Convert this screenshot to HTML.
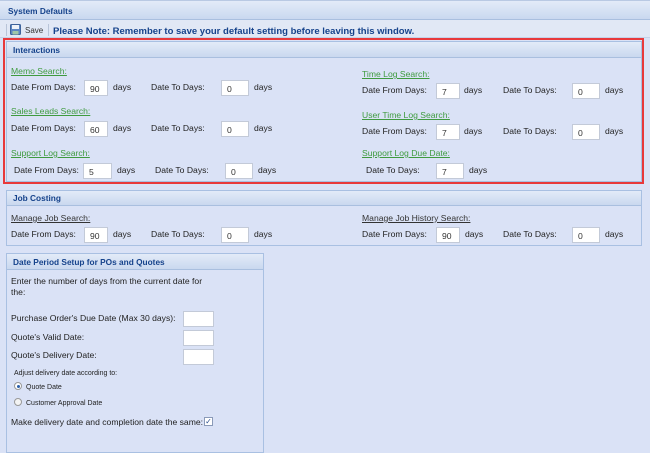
<!DOCTYPE html>
<html><head><meta charset="utf-8"><style>
*{margin:0;padding:0;box-sizing:border-box}
body{width:650px;height:441px;overflow:hidden;background:#dae2f6;font-family:"Liberation Sans",Arial,sans-serif;font-size:8.6px;color:#222;position:relative}
.a{position:absolute;white-space:nowrap;line-height:11px}
.hd{position:absolute;background:linear-gradient(#e3ebf8,#c9d8ef);border-bottom:1px solid #a9bfdf;color:#15428b;font-weight:bold;font-size:8.3px;padding-left:6px}
.lk{color:#3f9b3f;text-decoration:underline}
.lk2{color:#333;text-decoration:underline}
.in{position:absolute;background:#fff;border:1px solid #c3cad8;height:16px;font-size:8.6px;padding:3px 0 0 5px;line-height:10px;color:#333}
.pn{position:absolute;border:1px solid #a9c0e2}
</style></head><body>
<div class="hd" style="left:0;top:0;width:650px;height:20px;line-height:20px;padding-left:8px;border-top:1px solid #b9c9e3">System Defaults</div>
<div style="position:absolute;left:0;top:20px;width:650px;height:18px;background:#e1e8f5;border-bottom:1px solid #c5d2e8"></div>
<div style="position:absolute;left:6px;top:24px;width:1px;height:12px;background:#b8c4d8"></div>
<svg style="position:absolute;left:10px;top:24px" width="11" height="11" viewBox="0 0 11 11"><rect x="0.5" y="0.5" width="10" height="10" rx="1" fill="#5c86c2" stroke="#3d629a"/><rect x="2" y="1" width="7" height="4" fill="#eef2f8"/><rect x="2.5" y="7" width="6" height="3.5" fill="#9fc7a8"/></svg>
<div class="a" style="left:25px;top:25px;font-size:8px;color:#333">Save</div>
<div style="position:absolute;left:48px;top:24px;width:1px;height:12px;background:#b8c4d8"></div>
<div class="a" style="left:53px;top:26px;color:#15428b;font-weight:bold;font-size:9.5px">Please Note: Remember to save your default setting before leaving this window.</div>

<div class="pn" style="left:6px;top:41px;width:636px;height:141px"></div>
<div class="hd" style="left:7px;top:42px;width:634px;height:16px;line-height:16px">Interactions</div>
<div style="position:absolute;left:3px;top:38px;width:641px;height:146px;border:2px solid #e8393b"></div>

<div class="a lk" style="left:11px;top:66px">Memo Search:</div>
<div class="a" style="left:11px;top:82px">Date From Days:</div><div class="in" style="left:84px;top:80px;width:24px">90</div><div class="a" style="left:113px;top:82px">days</div>
<div class="a" style="left:151px;top:82px">Date To Days:</div><div class="in" style="left:221px;top:80px;width:28px">0</div><div class="a" style="left:254px;top:82px">days</div>

<div class="a lk" style="left:11px;top:106px">Sales Leads Search:</div>
<div class="a" style="left:11px;top:123px">Date From Days:</div><div class="in" style="left:84px;top:121px;width:24px">60</div><div class="a" style="left:113px;top:123px">days</div>
<div class="a" style="left:151px;top:123px">Date To Days:</div><div class="in" style="left:221px;top:121px;width:28px">0</div><div class="a" style="left:254px;top:123px">days</div>

<div class="a lk" style="left:11px;top:148px">Support Log Search:</div>
<div class="a" style="left:14px;top:165px">Date From Days:</div><div class="in" style="left:83px;top:163px;width:29px">5</div><div class="a" style="left:117px;top:165px">days</div>
<div class="a" style="left:155px;top:165px">Date To Days:</div><div class="in" style="left:225px;top:163px;width:28px">0</div><div class="a" style="left:258px;top:165px">days</div>

<div class="a lk" style="left:362px;top:69px">Time Log Search:</div>
<div class="a" style="left:362px;top:85px">Date From Days:</div><div class="in" style="left:436px;top:83px;width:24px">7</div><div class="a" style="left:464px;top:85px">days</div>
<div class="a" style="left:503px;top:85px">Date To Days:</div><div class="in" style="left:572px;top:83px;width:28px">0</div><div class="a" style="left:605px;top:85px">days</div>

<div class="a lk" style="left:362px;top:110px">User Time Log Search:</div>
<div class="a" style="left:362px;top:126px">Date From Days:</div><div class="in" style="left:436px;top:124px;width:24px">7</div><div class="a" style="left:464px;top:126px">days</div>
<div class="a" style="left:503px;top:126px">Date To Days:</div><div class="in" style="left:572px;top:124px;width:28px">0</div><div class="a" style="left:605px;top:126px">days</div>

<div class="a lk" style="left:362px;top:148px">Support Log Due Date:</div>
<div class="a" style="left:366px;top:165px">Date To Days:</div><div class="in" style="left:436px;top:163px;width:28px">7</div><div class="a" style="left:469px;top:165px">days</div>

<div class="pn" style="left:6px;top:190px;width:636px;height:56px"></div>
<div class="hd" style="left:7px;top:191px;width:634px;height:15px;line-height:15px">Job Costing</div>
<div class="a lk2" style="left:11px;top:213px">Manage Job Search:</div>
<div class="a" style="left:11px;top:229px">Date From Days:</div><div class="in" style="left:84px;top:227px;width:24px">90</div><div class="a" style="left:113px;top:229px">days</div>
<div class="a" style="left:151px;top:229px">Date To Days:</div><div class="in" style="left:221px;top:227px;width:28px">0</div><div class="a" style="left:254px;top:229px">days</div>
<div class="a lk2" style="left:362px;top:213px">Manage Job History Search:</div>
<div class="a" style="left:362px;top:229px">Date From Days:</div><div class="in" style="left:436px;top:227px;width:24px">90</div><div class="a" style="left:465px;top:229px">days</div>
<div class="a" style="left:503px;top:229px">Date To Days:</div><div class="in" style="left:572px;top:227px;width:28px">0</div><div class="a" style="left:605px;top:229px">days</div>

<div class="pn" style="left:6px;top:253px;width:258px;height:200px"></div>
<div class="hd" style="left:7px;top:254px;width:256px;height:16px;line-height:16px">Date Period Setup for POs and Quotes</div>
<div class="a" style="left:11px;top:276px">Enter the number of days from the current date for</div>
<div class="a" style="left:11px;top:287px">the:</div>
<div class="a" style="left:11px;top:313px">Purchase Order's Due Date (Max 30 days):</div><div class="in" style="left:183px;top:311px;width:31px"></div>
<div class="a" style="left:11px;top:332px">Quote's Valid Date:</div><div class="in" style="left:183px;top:330px;width:31px"></div>
<div class="a" style="left:11px;top:350px">Quote's Delivery Date:</div><div class="in" style="left:183px;top:349px;width:31px"></div>
<div class="a" style="left:14px;top:368px;font-size:7px">Adjust delivery date according to:</div>
<div style="position:absolute;left:14px;top:382px;width:8px;height:8px;border-radius:50%;background:#fff;border:1px solid #999"><div style="position:absolute;left:1.5px;top:1.5px;width:3px;height:3px;border-radius:50%;background:#2a5ea8"></div></div>
<div class="a" style="left:26px;top:382px;font-size:7px">Quote Date</div>
<div style="position:absolute;left:14px;top:398px;width:8px;height:8px;border-radius:50%;background:#f4f4f4;border:1px solid #999"></div>
<div class="a" style="left:26px;top:398px;font-size:7px">Customer Approval Date</div>
<div class="a" style="left:11px;top:417px">Make delivery date and completion date the same:</div>
<div style="position:absolute;left:204px;top:417px;width:9px;height:9px;background:#fff;border:1px solid #8a9ab8;font-size:8px;line-height:7px;color:#2a4f90;text-align:center">✓</div>
</body></html>
